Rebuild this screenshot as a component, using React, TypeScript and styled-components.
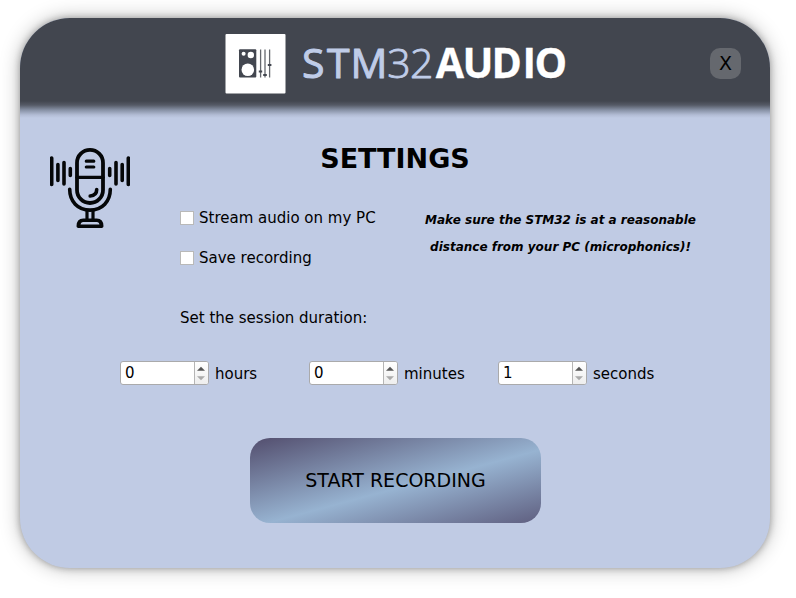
import React from "react";
import styled, { createGlobalStyle } from "styled-components";

const GlobalStyle = createGlobalStyle`
  * { box-sizing: border-box; }
  html, body { margin: 0; background: #fff; overflow: hidden; }
  body { font-family: "DejaVu Sans", sans-serif; color: #000; }
`;

const Desktop = styled.div`
  width: 796px;
  height: 598px;
  padding: 18px 0 0 20px;
`;

const Window = styled.main`
  width: 750px;
  height: 550px;
  border-radius: 50px;
  background: #c0cbe4;
  box-shadow: 0 0 7px rgba(0, 0, 0, 0.3), 0 0 20px rgba(0, 0, 0, 0.28);
  overflow: hidden;
`;

const Header = styled.header`
  display: flex;
  align-items: flex-start;
  height: 100px;
  padding: 16px 29px 0 205px;
  background: linear-gradient(#42464f 83px, #555a66 87px, #8791a5 92px, #b3bdd5 97px, #c0cbe4 100px);
`;

const CloseButton = styled.button`
  width: 31px;
  height: 31px;
  margin: 14px 0 0 auto;
  padding: 0;
  border: 0;
  border-radius: 10px;
  background: #65686e;
  color: #000;
  font: 19px/31px "DejaVu Sans", sans-serif;
`;

const Intro = styled.div`
  display: grid;
  grid-template-columns: 130px 1fr 130px;
  height: 90px;
`;

const MicIcon = styled.svg`
  width: 80px;
  height: 80px;
  margin: 30px 0 0 30px;
`;

const Title = styled.h1`
  margin: 25px 0 0;
  font-size: 27px;
  line-height: 32px;
  text-align: center;
`;

const Options = styled.section`
  display: flex;
  height: 100px;
  padding: 0 65px 0 160px;
`;

const Checks = styled.div`
  display: flex;
  flex-direction: column;
  gap: 20px;
  width: 240px;
`;

const CheckRow = styled.label`
  display: flex;
  align-items: center;
  gap: 5px;
  height: 20px;
  font-size: 15px;
  white-space: nowrap;
`;

const Check = styled.input`
  appearance: none;
  width: 14px;
  height: 14px;
  margin: 0;
  border: 1px solid #b9b9b8;
  background: #fff;
`;

const Warning = styled.p`
  width: 281px;
  margin: -1px 0 0;
  font-size: 12px;
  font-style: italic;
  font-weight: bold;
  line-height: 27px;
  text-align: center;
  white-space: nowrap;
`;

const Prompt = styled.p`
  height: 20px;
  margin: 0 0 0 160px;
  font-size: 15px;
  line-height: 20px;
`;

const Durations = styled.section`
  display: flex;
  margin: 33px 0 0 100px;
`;

const Duration = styled.div`
  display: flex;
  align-items: center;
  gap: 6px;
  width: 189px;
  height: 24px;
  font-size: 15px;
  line-height: 26px;
`;

const SpinBox = styled.div`
  display: flex;
  width: 89px;
  height: 24px;
  border: 1px solid #aaaaab;
  border-radius: 3px;
  background: #fff;
  overflow: hidden;
`;

const Value = styled.span`
  flex: 1;
  padding-left: 4px;
  font-size: 15px;
  line-height: 23px;
`;

const Unit = styled.span`
  height: 24px;
`;

const Arrows = styled.svg`
  width: 14px;
  height: 22px;
  border-left: 1px solid #b5b5b5;
  background: linear-gradient(#fff, #eee);
`;

const StartButton = styled.button`
  display: block;
  width: 291px;
  height: 85px;
  margin: 53px 0 0 230px;
  padding: 0;
  border: 0;
  border-radius: 20px;
  background: linear-gradient(165deg, #534e6e, #97b3d1 55%, #5f5f80);
  color: #000;
  font: 19px/85px "DejaVu Sans", sans-serif;
`;

function Logo() {
  return (
    <svg width="350" height="62" viewBox="0 0 350 62" fontFamily="Open Sans" fontSize="41">
      <rect x="0.5" y="0" width="60" height="59.5" rx="1" fill="#fff" />
      <rect x="14" y="15.3" width="17.3" height="28.2" rx="1" fill="#42464f" />
      <circle cx="18.6" cy="19.8" r="2" fill="#fff" />
      <circle cx="25.8" cy="21" r="3.2" fill="#fff" />
      <circle cx="22.8" cy="35.7" r="6.3" fill="#fff" />
      <g stroke="#65686e" strokeWidth="1.3" fill="none">
        <path d="M35.6 15.5v28M40 15.5v28M44.6 15.5v28" />
        <path stroke="#42464f" strokeWidth="2" d="M33.8 37.5h3.4M38.2 41h3.6M42.8 31h3.6" />
      </g>
      <g strokeLinejoin="round">
        <text x="77 102 125.5" y="44.4" fill="#bfcce8" stroke="#bfcce8" strokeWidth="1">STM</text>
        <text x="162.3 185" y="44.4" fontWeight="300" fill="#bfcce8" stroke="#bfcce8" strokeWidth="0.9">32</text>
        <text x="210.8 237.6 266.4 297.4 309.600" y="44.4" fontWeight="700" fill="#fff" stroke="#fff" strokeWidth="0.3">AUDIO</text>
      </g>
    </svg>
  );
}

function Microphone() {
  return (
    <MicIcon viewBox="0 0 80 80" fill="none" stroke="#050708" strokeWidth="3.8" strokeLinecap="round" strokeLinejoin="round">
      <rect x="27" y="1.9" width="26" height="53.1" rx="13" />
      <path d="M27 29.3h26" strokeWidth="3.2" />
      <path d="M36.3 13.2h7.5M36.3 19h7.5" strokeWidth="3.2" />
      <path d="M46.7 41.5c0 4-2.7 6.200-6.500 6.500M19.700 41.300c0 12 8 20.800 20.300 20.800s20.300-8.800 20.300-20.800" strokeWidth="3.600" />
      <path d="M37 63v9M43 63v9" strokeWidth="3.200" />
      <path d="M29.300 78.200c0-4 1.500-6 4.500-6h12.400c3 0 4.500 2 4.500 6z" transform="translate(-3.200 0) scale(1.080 1)" strokeWidth="3.600" />
      <path strokeWidth="3.600" d="M1.700 10v26.500M7.900 16.500v16M14 14.500v21.500M20.300 20.500v7M59.700 20.500v7M66 14.500v21.500M72.200 16.500v16M78.300 10v26.500" />
    </MicIcon>
  );
}

function TimeField({ value, unit }: { value: number; unit: string }) {
  return (
    <Duration>
      <SpinBox>
        <Value>{value}</Value>
        <Arrows viewBox="0 0 13 22">
          <path d="M2 8.8h8L6 4.7z" fill="#555" />
          <path d="M2 14.2h8l-4 4z" fill="#aaa" />
        </Arrows>
      </SpinBox>
      <Unit>{unit}</Unit>
    </Duration>
  );
}

export default function App() {
  return (
    <>
      <GlobalStyle />
      <Desktop>
        <Window>
          <Header>
            <Logo />
            <CloseButton>X</CloseButton>
          </Header>
          <Intro>
            <Microphone />
            <Title>SETTINGS</Title>
          </Intro>
          <Options>
            <Checks>
              <CheckRow><Check type="checkbox" />Stream audio on my PC</CheckRow>
              <CheckRow><Check type="checkbox" />Save recording</CheckRow>
            </Checks>
            <Warning>
              Make sure the STM32 is at a reasonable<br />distance from your PC (microphonics)!
            </Warning>
          </Options>
          <Prompt>Set the session duration:</Prompt>
          <Durations>
            <TimeField value={0} unit="hours" />
            <TimeField value={0} unit="minutes" />
            <TimeField value={1} unit="seconds" />
          </Durations>
          <StartButton>START RECORDING</StartButton>
        </Window>
      </Desktop>
    </>
  );
}
